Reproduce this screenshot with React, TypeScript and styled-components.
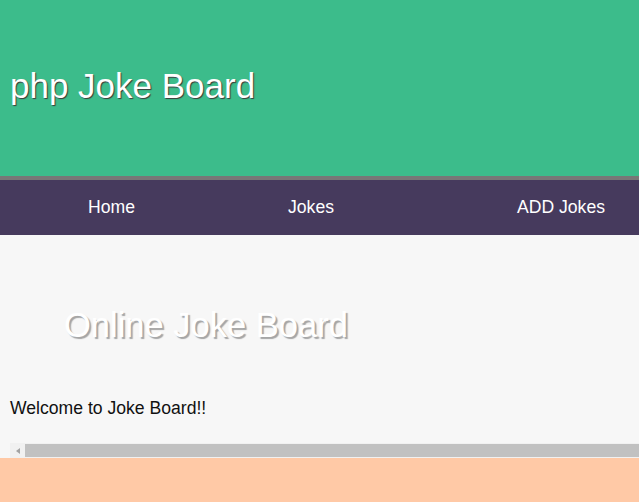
import React from "react";
import styled, { createGlobalStyle } from "styled-components";

const GlobalStyle = createGlobalStyle`
  html, body {
    margin: 0;
    padding: 0;
  }
  body {
    font-family: "Liberation Sans", Arial, sans-serif;
    background: #ffc9a6;
  }
`;

const Page = styled.div`
  display: flex;
  flex-direction: column;
  min-height: 100vh;
`;

const Header = styled.header`
  box-sizing: content-box;
  height: 110px;
  padding: 66px 0 0 10px;
  background: #3cbc8b;
  border-bottom: 4px solid #777777;
`;

const Title = styled.h1`
  margin: 0;
  font-size: 35px;
  font-weight: normal;
  line-height: normal;
  color: #ffffff;
  text-shadow: 1px 1px 1px #3a3a3a;
`;

const Nav = styled.nav`
  display: flex;
  align-items: center;
  height: 55px;
  padding-left: 88px;
  background: #463a5d;
`;

const NavItem = styled.a<{ $width: number }>`
  flex: 0 0 ${(p) => p.$width}px;
  color: #ffffff;
  font-size: 17.6px;
  text-decoration: none;
  white-space: nowrap;
`;

const Main = styled.main`
  display: flex;
  flex-direction: column;
  padding: 71px 0 0 10px;
  background: #f7f7f7;
`;

const Heading = styled.h2`
  margin: 0 0 0 54px;
  font-size: 34.5px;
  font-weight: normal;
  line-height: normal;
  color: #ffffff;
  text-shadow: 2px 2px 1px #a5a5a5;
`;

const Welcome = styled.p`
  margin: 53px 0 24px;
  font-size: 17.6px;
  line-height: normal;
  color: #111111;
`;

const ScrollTrack = styled.div`
  display: flex;
  height: 15px;
  background: #f1f1f1;
`;

const ScrollArrow = styled.div`
  display: flex;
  align-items: center;
  justify-content: center;
  width: 15px;
  &::before {
    content: "";
    width: 0;
    height: 0;
    border-top: 3.5px solid transparent;
    border-bottom: 3.5px solid transparent;
    border-right: 4px solid #a3a3a3;
  }
`;

const ScrollThumb = styled.div`
  flex: 1;
  margin: 1px 0;
  background: #c1c1c1;
`;

const Footer = styled.footer`
  flex: 1;
  min-height: 44px;
  background: #ffc9a6;
`;

export default function App() {
  return (
    <Page>
      <GlobalStyle />
      <Header>
        <Title>php Joke Board</Title>
      </Header>
      <Nav>
        <NavItem href="#" $width={200}>Home</NavItem>
        <NavItem href="#" $width={229}>Jokes</NavItem>
        <NavItem href="#" $width={120}>ADD Jokes</NavItem>
      </Nav>
      <Main>
        <Heading>Online Joke Board</Heading>
        <Welcome>Welcome to Joke Board!!</Welcome>
        <ScrollTrack>
          <ScrollArrow />
          <ScrollThumb />
        </ScrollTrack>
      </Main>
      <Footer />
    </Page>
  );
}
